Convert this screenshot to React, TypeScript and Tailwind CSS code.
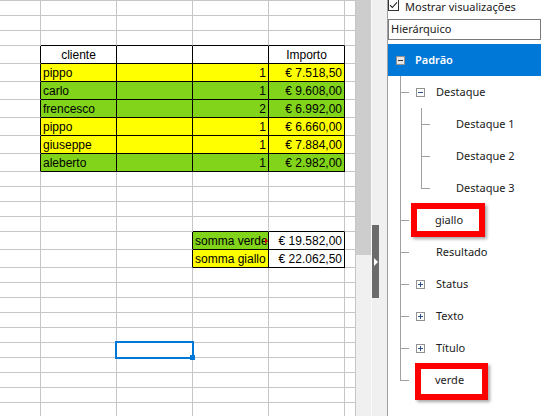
import React from 'react';

type C = {
  t?: string;
  a?: 'l' | 'c' | 'r';
  bg?: string;
  r?: boolean; // right border black
  b?: boolean; // bottom border black
  mark?: boolean;
};

type Row = { h: 15 | 18; cells: C[]; sel?: boolean };

const widths = ['w-[41px]', 'w-[76px]', 'w-[76px]', 'w-[76px]', 'w-[76px]', 'w-[11px]'];

const Y = 'bg-[#ffff00]';
const G = 'bg-[#81d41a]';

const plain = (): Row => ({ h: 15, cells: [{}, {}, {}, {}, {}, {}] });

const data: [string, string, string, string][] = [
  ['pippo', '1', '€ 7.518,50', Y],
  ['carlo', '1', '€ 9.608,00', G],
  ['frencesco', '2', '€ 6.992,00', G],
  ['pippo', '1', '€ 6.660,00', Y],
  ['giuseppe', '1', '€ 7.884,00', Y],
  ['aleberto', '1', '€ 2.982,00', G],
];

const rows: Row[] = [
  plain(),
  plain(),
  { h: 15, cells: [{}, { b: true }, { b: true }, { b: true }, { b: true }, {}] },
  {
    h: 18,
    cells: [
      { r: true },
      { t: 'cliente', a: 'c', r: true, b: true },
      { r: true, b: true },
      { r: true, b: true },
      { t: 'Importo', a: 'c', r: true, b: true },
      {},
    ],
  },
  ...data.map(([n, q, v, bg]): Row => ({
    h: 18,
    cells: [
      { r: true },
      { t: n, bg, r: true, b: true },
      { bg, r: true, b: true },
      { t: q, a: 'r', bg, r: true, b: true },
      { t: v, a: 'r', bg, r: true, b: true },
      {},
    ],
  })),
  plain(),
  plain(),
  plain(),
  { h: 15, cells: [{}, {}, {}, { b: true }, { b: true }, {}] },
  {
    h: 18,
    cells: [{}, {}, { r: true }, { t: 'somma verde', bg: G, r: true, b: true, mark: true }, { t: '€ 19.582,00', a: 'r', r: true, b: true }, {}],
  },
  {
    h: 18,
    cells: [{}, {}, { r: true }, { t: 'somma giallo', bg: Y, r: true, b: true }, { t: '€ 22.062,50', a: 'r', r: true, b: true }, {}],
  },
  plain(),
  plain(),
  plain(),
  plain(),
  plain(),
  { ...plain(), sel: true },
  plain(),
  plain(),
  plain(),
  plain(),
];

function Sheet() {
  return (
    <div className="w-[356px] shrink-0 h-full overflow-hidden bg-white text-[12px] text-black" style={{ fontFamily: '"Liberation Sans", Arial, sans-serif' }}>
      <div className="h-px bg-[#c6c6c6]" />
      {rows.map((row, i) => (
        <div key={i} className={`relative flex ${row.h === 15 ? 'h-[15px]' : 'h-[18px]'}`}>
          {row.cells.map((c, j) => (
            <div
              key={j}
              className={`${widths[j]} relative shrink-0 h-full border-r border-b ${c.r ? 'border-r-black' : 'border-r-[#c6c6c6]'} ${c.b ? 'border-b-black' : 'border-b-[#c6c6c6]'} ${c.bg ?? ''} flex items-center overflow-hidden whitespace-nowrap px-[2px] leading-none ${c.a === 'c' ? 'justify-center' : c.a === 'r' ? 'justify-end' : 'justify-start'}`}
            >
              <span className="pt-[1px]">{c.t}</span>
              {c.mark && (
                <span className="absolute right-0 top-[6px] w-0 h-0 border-y-[3px] border-y-transparent border-l-[3px] border-l-[#e00000]" />
              )}
            </div>
          ))}
          {row.sel && (
            <div className="absolute z-10 left-[115px] -top-[2px] w-[79px] h-[18px] border-2 border-[#0078d7]">
              <div className="absolute left-[73px] top-[12px] w-[5px] h-[5px] bg-[#0078d7]" />
            </div>
          )}
        </div>
      ))}
    </div>
  );
}

function Box({ plus, onBlue }: { plus?: boolean; onBlue?: boolean }) {
  return (
    <svg width="9" height="9" viewBox="0 0 9 9" className="shrink-0">
      <rect x="0.5" y="0.5" width="8" height="8" fill={onBlue ? '#e6e6e6' : '#ffffff'} stroke="#919191" />
      <path d="M2 4.5H7" stroke={onBlue ? '#333' : '#2b4f86'} />
      {plus && <path d="M4.5 2V7" stroke="#2b4f86" />}
    </svg>
  );
}

type T = { label: string; x: number; box?: 'plus' | 'minus' };

const tree: T[] = [
  { label: 'Destaque', x: 28, box: 'minus' },
  { label: 'Destaque 1', x: 68 },
  { label: 'Destaque 2', x: 68 },
  { label: 'Destaque 3', x: 68 },
  { label: 'giallo', x: 47 },
  { label: 'Resultado', x: 48 },
  { label: 'Status', x: 28, box: 'plus' },
  { label: 'Texto', x: 28, box: 'plus' },
  { label: 'Título', x: 28, box: 'plus' },
  { label: 'verde', x: 47 },
];

function Panel() {
  return (
    <div className="flex-1 h-full border-l border-[#a0a0a0] bg-white text-[11px] text-[#1a1a1a] overflow-hidden" style={{ fontFamily: '"Noto Sans", "Open Sans", sans-serif' }}>
      <div className="h-[19px] flex items-start">
        <div className="w-[11px] h-[12px] -mt-[1px] border border-[#333] bg-white flex items-center justify-center shrink-0">
          <svg width="9" height="8" viewBox="0 0 9 8">
            <path d="M1 4.2L3.3 6.5L8 1.3" fill="none" stroke="#222" strokeWidth="1.1" />
          </svg>
        </div>
        <span className="ml-[6px] leading-[13px]">Mostrar visualizações</span>
      </div>
      <div className="h-[21px] border border-[#7a7a7a] flex items-center pl-[2px]">Hierárquico</div>
      <div className="h-[4px]" />
      <div className="relative">
        <div className="h-[32px] bg-[#0078d7] flex items-center pl-[8px] text-white font-semibold">
          <Box onBlue />
          <span className="ml-[10px]">Padrão</span>
        </div>
        {tree.map((t, i) => (
          <div key={i} className="h-[32px] flex items-center pt-[1px]">
            {t.box ? (
              <div className="flex items-center" style={{ paddingLeft: t.x }}>
                <Box plus={t.box === 'plus'} />
                <span className="ml-[11px]">{t.label}</span>
              </div>
            ) : (
              <span style={{ paddingLeft: t.x }}>{t.label}</span>
            )}
          </div>
        ))}
        <svg className="absolute left-0 top-0 pointer-events-none" width="60" height="360">
          <g stroke="#a0a0a0" strokeWidth="1">
            <path d="M12.5 32V336.5" />
            {[48, 176, 208, 240, 272, 304, 336].map((y) => (
              <path key={y} d={`M12 ${y + 0.5}H21`} />
            ))}
            <path d="M33.5 64V144.5" />
            {[80, 112, 144].map((y) => (
              <path key={y} d={`M33 ${y + 0.5}H42`} />
            ))}
          </g>
        </svg>
        <div className="absolute left-[23px] top-[159px] w-[74px] h-[34px] border-[6px] border-[#ff0000] shadow-[2px_2px_3px_rgba(0,0,0,0.35)]" />
        <div className="absolute left-[27px] top-[319px] w-[73px] h-[37px] border-[6px] border-[#ff0000] shadow-[2px_2px_3px_rgba(0,0,0,0.35)]" />
      </div>
    </div>
  );
}

export default function App() {
  return (
    <div className="w-[541px] h-[416px] flex overflow-hidden bg-white">
      <Sheet />
      <div className="w-[15px] shrink-0 h-full flex flex-col bg-[#f0f0f0]">
        <div className="h-[255px] bg-[#cdcdcd]" />
      </div>
      <div className="w-px shrink-0 h-full bg-[#fafafa]" />
      <div className="w-[15px] shrink-0 h-full bg-[#f0f0f0] flex flex-col">
        <div className="h-[225px]" />
        <div className="w-[7px] h-[73px] bg-[#6b6b6b] flex items-center justify-center">
          <span className="w-0 h-0 border-y-[4px] border-y-transparent border-l-[4px] border-l-white" />
        </div>
      </div>
      <Panel />
    </div>
  );
}
